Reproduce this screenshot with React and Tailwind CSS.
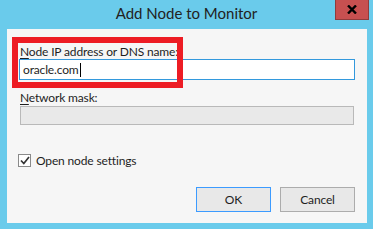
import React from "react";

export default function App() {
  return (
    <div
      className="relative w-[373px] h-[229px] bg-[#6acbeb] overflow-hidden text-[#1e1e1e]"
      style={{ fontFamily: 'Lato, "Liberation Sans", Arial, sans-serif' }}
    >
      {/* title bar */}
      <div className="h-[29px] flex items-center justify-center text-[15px] leading-none pb-[2px] text-[#222]">
        Add Node to Monitor
      </div>
      <button className="absolute top-0 left-[335px] w-[34px] h-[20px] bg-[#c75050] border border-t-0 border-[#8f3c3c] flex items-center justify-center">
        <svg width="10" height="9" viewBox="0 0 10 9">
          <path d="M1 0.5 L9 8.5 M9 0.5 L1 8.5" stroke="#000" strokeWidth="2.4" />
        </svg>
      </button>

      {/* client area */}
      <div className="relative ml-[7px] w-[360px] h-[194px] bg-[#f6f6f6] text-[12px] tracking-[-0.15px]">
        <div className="flex flex-col pt-[16px]">
          <label className="ml-[13px] leading-[14px]">
            <span className="underline underline-offset-2">N</span>ode IP address or DNS name:
          </label>
          <div className="ml-[12px] w-[336px] h-[21px] bg-white border border-[#3399dd] flex items-center pl-[3px]">
            oracle.com<span className="inline-block w-px h-[14px] bg-black ml-px" />
          </div>
          <label className="ml-[13px] mt-[11px] leading-[14px]">
            <span className="underline underline-offset-2">N</span>etwork mask:
          </label>
          <div className="ml-[13px] mt-px w-[334px] h-[19px] bg-[#e9e9e9] border border-[#b9b9b9]" />

          <div className="flex items-center ml-[11px] mt-[29px] h-[13px] gap-[5px]">
            <div className="w-[13px] h-[13px] bg-white border border-[#8a8a8a] flex items-center justify-center">
              <svg width="10" height="9" viewBox="0 0 10 9">
                <path d="M1 4.5 L3.8 7.5 L9 1" stroke="#333" strokeWidth="1.7" fill="none" />
              </svg>
            </div>
            <span className="leading-[13px]">Open node settings</span>
          </div>

          <div className="flex justify-end gap-[9px] mt-[20px] pr-[12px]">
            <button className="w-[75px] h-[25px] bg-[#e8e8e8] border border-[#3c9bff]">OK</button>
            <button className="w-[75px] h-[25px] bg-[#e8e8e8] border border-[#acacac]">Cancel</button>
          </div>
        </div>

        {/* red annotation box */}
        <div className="absolute left-[5px] top-[8px] w-[171px] h-[51px] border-[6px] border-[#ed1c24] pointer-events-none" />
      </div>
    </div>
  );
}
